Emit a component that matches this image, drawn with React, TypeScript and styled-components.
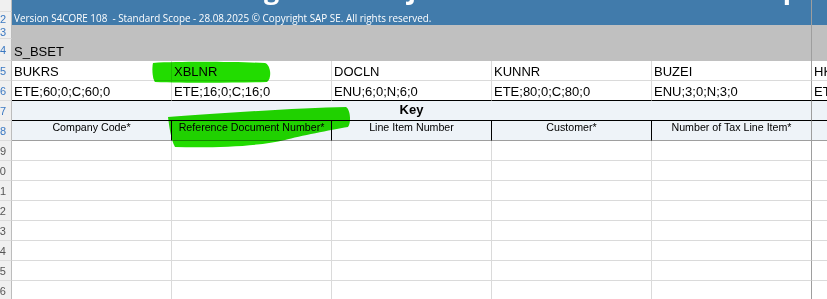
import React from "react";
import styled, { createGlobalStyle } from "styled-components";

const BLUE = "#417bab";
const GRAY = "#c0c0c0";
const GRID = "#dadada";
const FREEZE = "#9e9e9e";
const HEAD_BG = "#eef3f8";
const MARKER = "#22dc00";

const GlobalStyle = createGlobalStyle`
  html, body {
    margin: 0;
    padding: 0;
    background: #ffffff;
    overflow: hidden;
  }
`;

const Viewport = styled.div`
  position: relative;
  width: 827px;
  height: 299px;
  overflow: hidden;
  font-family: "Liberation Sans", Arial, sans-serif;
  color: #000;
`;

/* The worksheet is scrolled down a little, so only the foot of the title row shows. */
const Sheet = styled.div`
  display: flex;
  flex-direction: column;
  margin-top: -28px;
`;

const Row = styled.div<{ $h: number }>`
  display: grid;
  grid-template-columns: 12px repeat(5, 160px) 1fr;
  height: ${(p) => p.$h}px;
`;

const RowHead = styled.div<{ $selected?: boolean }>`
  box-sizing: border-box;
  display: flex;
  align-items: center;
  justify-content: flex-end;
  padding-right: 5px;
  overflow: hidden;
  white-space: nowrap;
  background: #f0f0f0;
  border-right: 1px solid #bcbcbc;
  border-bottom: 1px solid #dcdcdc;
  font-size: 11px;
  color: ${(p) => (p.$selected ? "#3a78c2" : "#555555")};
`;

const Band = styled.div<{ $bg: string; $span?: boolean; $edge?: boolean }>`
  box-sizing: border-box;
  min-width: 0;
  display: flex;
  align-items: flex-end;
  white-space: nowrap;
  background: ${(p) => p.$bg};
  grid-column: ${(p) => (p.$span ? "2 / 7" : "auto")};
  border-right: ${(p) => (p.$edge ? `1px solid ${FREEZE}` : "none")};
`;

const Title = styled.div`
  align-self: flex-start;
  padding: 2px 0 0 2px;
  font-family: "Open Sans", "Noto Sans", sans-serif;
  font-weight: 700;
  font-size: 27px;
  line-height: 30px;
  color: #ffffff;
`;

const Version = styled.div`
  padding: 0 0 1px 2px;
  font-family: "Open Sans", "Noto Sans", sans-serif;
  font-size: 9.9px;
  line-height: 13px;
  color: #ffffff;
`;

const SheetName = styled.div`
  padding: 0 0 2px 2px;
  font-size: 13px;
  line-height: 15px;
`;

const Cell = styled.div<{ $right?: string; $bottom?: string; $bg?: string; $open?: boolean }>`
  box-sizing: border-box;
  min-width: 0;
  overflow: hidden;
  white-space: nowrap;
  background: ${(p) => p.$bg ?? "#ffffff"};
  border-right: ${(p) => (p.$open ? "none" : `1px solid ${p.$right ?? GRID}`)};
  border-bottom: 1px solid ${(p) => p.$bottom ?? GRID};
`;

const FieldCell = styled(Cell)`
  display: flex;
  align-items: flex-end;
  padding: 0 0 1px 2px;
  font-size: 13px;
  line-height: 15px;
`;

const KeyCell = styled(Cell)`
  grid-column: 2 / 7;
  text-align: center;
  padding-top: 1px;
  font-size: 13px;
  line-height: 15px;
  font-weight: 700;
`;

const LabelCell = styled(Cell)`
  text-align: center;
  font-size: 10.67px;
  line-height: 12px;
`;

const Marker = styled.svg`
  position: absolute;
  left: 0;
  top: 0;
  pointer-events: none;
  mix-blend-mode: multiply;
`;

type Field = { name: string; type: string; label: string };

const fields: Field[] = [
  { name: "BUKRS", type: "ETE;60;0;C;60;0", label: "Company Code*" },
  { name: "XBLNR", type: "ETE;16;0;C;16;0", label: "Reference Document Number*" },
  { name: "DOCLN", type: "ENU;6;0;N;6;0", label: "Line Item Number" },
  { name: "KUNNR", type: "ETE;80;0;C;80;0", label: "Customer*" },
  { name: "BUZEI", type: "ENU;3;0;N;3;0", label: "Number of Tax Line Item*" },
];

const nextField = { name: "HKONT", type: "ETE;10;0;C;10;0" };

const edge = (i: number) => (i === fields.length - 1 ? FREEZE : undefined);

export default function App() {
  const emptyRows = [9, 10, 11, 12, 13, 14, 15, 16];

  return (
    <>
      <GlobalStyle />
      <Viewport>
        <Sheet>
          <Row $h={40}>
            <RowHead $selected>1</RowHead>
            <Band $bg={BLUE} $span $edge>
              <Title>Source Data for Migration Object: Tax Data Entries Lookup</Title>
            </Band>
            <Band $bg={BLUE} />
          </Row>

          <Row $h={13}>
            <RowHead $selected>2</RowHead>
            <Band $bg={BLUE} $span $edge>
              <Version>
                Version S4CORE 108&nbsp; - Standard Scope - 28.08.2025 © Copyright SAP SE. All rights reserved.
              </Version>
            </Band>
            <Band $bg={BLUE} />
          </Row>

          <Row $h={14}>
            <RowHead $selected>3</RowHead>
            <Band $bg={GRAY} $span $edge />
            <Band $bg={GRAY} />
          </Row>

          <Row $h={22}>
            <RowHead $selected>4</RowHead>
            <Band $bg={GRAY} $span $edge>
              <SheetName>S_BSET</SheetName>
            </Band>
            <Band $bg={GRAY} />
          </Row>

          <Row $h={20}>
            <RowHead $selected>5</RowHead>
            {fields.map((f, i) => (
              <FieldCell key={f.name} $right={edge(i)}>
                {f.name}
              </FieldCell>
            ))}
            <FieldCell $open>{nextField.name}</FieldCell>
          </Row>

          <Row $h={20}>
            <RowHead $selected>6</RowHead>
            {fields.map((f, i) => (
              <FieldCell key={f.name} $right={edge(i)} $bottom="#000">
                {f.type}
              </FieldCell>
            ))}
            <FieldCell $open $bottom="#000">
              {nextField.type}
            </FieldCell>
          </Row>

          <Row $h={20}>
            <RowHead $selected>7</RowHead>
            <KeyCell $bg={HEAD_BG} $right={FREEZE} $bottom="#000">
              Key
            </KeyCell>
            <Cell $bg={HEAD_BG} $open $bottom="#000" />
          </Row>

          <Row $h={20}>
            <RowHead $selected>8</RowHead>
            {fields.map((f, i) => (
              <LabelCell key={f.name} $bg={HEAD_BG} $right={edge(i) ?? "#000"} $bottom={FREEZE}>
                {f.label}
              </LabelCell>
            ))}
            <LabelCell $bg={HEAD_BG} $open $bottom={FREEZE} />
          </Row>

          {emptyRows.map((n) => (
            <Row key={n} $h={20}>
              <RowHead>{n}</RowHead>
              {fields.map((f, i) => (
                <Cell key={f.name} $right={edge(i)} />
              ))}
              <Cell $open />
            </Row>
          ))}
        </Sheet>

        <Marker width={827} height={299} viewBox="0 0 827 299">
          <path
            fill={MARKER}
            d="M153,63 C185,61 240,62 265,63 C271,65 272,79 267,82 C230,83 185,83 155,82 C152,78 152,67 153,63 Z"
          />
          <path
            fill={MARKER}
            d="M168,117 C220,113 300,108 346,107 C351,110 351,124 348,127 C330,130 300,136 285,140 C260,146 220,148 175,147 C171,140 169,125 168,117 Z"
          />
        </Marker>
      </Viewport>
    </>
  );
}
